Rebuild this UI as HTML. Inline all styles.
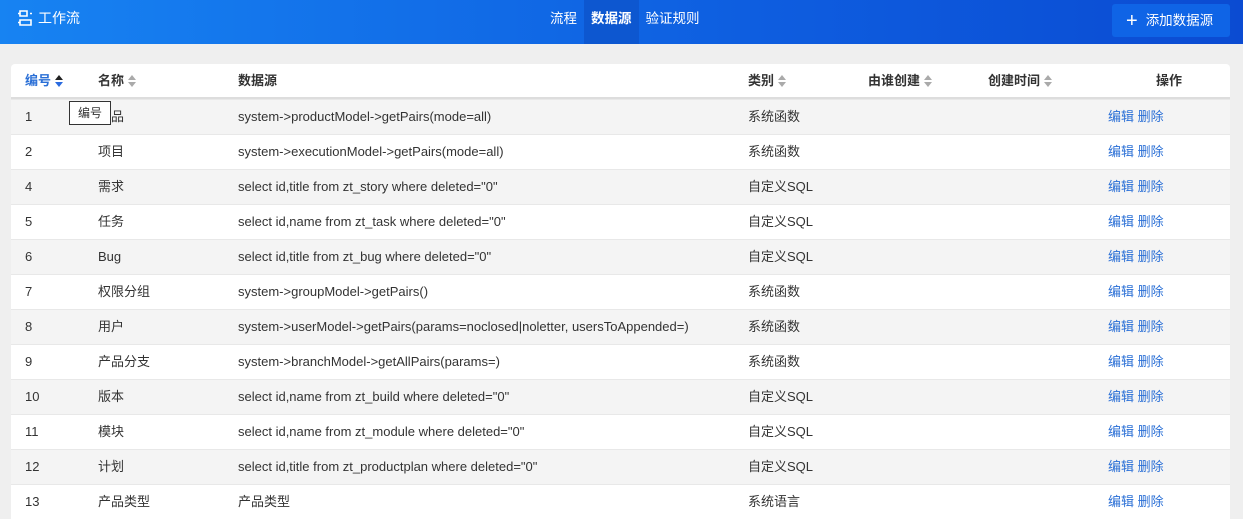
<!DOCTYPE html>
<html><head><meta charset="utf-8"><style>
*{margin:0;padding:0;box-sizing:border-box}
body{width:1243px;height:512px;overflow:hidden;background:#efefef;font-family:"Liberation Sans","Noto Sans CJK SC",sans-serif;font-size:13px;color:#333}
.top{position:absolute;left:0;top:0;width:1243px;height:44px;background:linear-gradient(90deg,#1783f2,#0e5ee0 60%,#0b4bd2);color:#fff}
.logo{position:absolute;left:17px;top:8px;font-size:14px;display:flex;align-items:center;gap:5px}
.nav{position:absolute;left:543px;top:0;display:flex;height:44px}
.nav span{padding:0 7px;line-height:37px;font-size:13.5px}
.nav span.a{background:#0d57d0;font-weight:bold}
.btn{position:absolute;left:1112px;top:4px;width:118px;height:33px;background:#0f64e6;border-radius:3px;font-size:13.5px;line-height:33px;padding-left:14px}
.btn b{font-size:20px;font-weight:normal;vertical-align:-2px;margin-right:8px}
.tbl{position:absolute;left:11px;top:64px;width:1219px;background:#fff;border-radius:4px 4px 0 0}
.row{position:relative;height:35px;border-top:1px solid #e8e8e8;background:#fff}
.row:nth-child(odd){background:#f4f4f4}
.hd{height:35px;border-bottom:2px solid #ddd;font-weight:bold;position:relative}
.c{position:absolute;top:0;line-height:34px;white-space:nowrap}
.hd .c{line-height:33px}
.s{display:inline-block;width:8px;height:12px;vertical-align:-2px;margin-left:4px;position:relative}
.s:before,.s:after{content:"";position:absolute;left:0;border-left:4px solid transparent;border-right:4px solid transparent}
.s:before{top:0;border-bottom:5px solid #aaa}
.s:after{bottom:0;border-top:5px solid #aaa}
.s.on:before{border-bottom-color:#222}.s.on:after{border-top-color:#2a6be0}
.l{color:#2a6fd6}
.tip{position:absolute;left:69px;top:101px;border:1px solid #333;background:#fff;font-size:12px;padding:2px 8px;line-height:18px}
</style></head><body>
<div class="top">
<div class="logo"><svg width="16" height="16" viewBox="0 0 16 16" fill="none" stroke="#fff" stroke-width="1.6"><path d="M3 1h7v5H3zM1 3.5h2M13 3.5h2M3 10h11v5H3zM1 12.5h2"/></svg>工作流</div>
<div class="nav"><span>流程</span><span class="a">数据源</span><span>验证规则</span></div>
<div class="btn"><b>+</b>添加数据源</div>
</div>
<div class="tbl">
<div class="hd">
<div class="c l" style="left:14px">编号<i class="s on"></i></div>
<div class="c" style="left:87px">名称<i class="s"></i></div>
<div class="c" style="left:227px">数据源</div>
<div class="c" style="left:737px">类别<i class="s"></i></div>
<div class="c" style="left:857px">由谁创建<i class="s"></i></div>
<div class="c" style="left:977px">创建时间<i class="s"></i></div>
<div class="c" style="left:1145px">操作</div>
</div>
<div>
<div class="row"><div class="c" style="left:14px">1</div><div class="c" style="left:87px">产品</div><div class="c" style="left:227px">system-&gt;productModel-&gt;getPairs(mode=all)</div><div class="c" style="left:737px">系统函数</div><div class="c l" style="left:1097px">编辑 删除</div></div>
<div class="row"><div class="c" style="left:14px">2</div><div class="c" style="left:87px">项目</div><div class="c" style="left:227px">system-&gt;executionModel-&gt;getPairs(mode=all)</div><div class="c" style="left:737px">系统函数</div><div class="c l" style="left:1097px">编辑 删除</div></div>
<div class="row"><div class="c" style="left:14px">4</div><div class="c" style="left:87px">需求</div><div class="c" style="left:227px">select id,title from zt_story where deleted="0"</div><div class="c" style="left:737px">自定义SQL</div><div class="c l" style="left:1097px">编辑 删除</div></div>
<div class="row"><div class="c" style="left:14px">5</div><div class="c" style="left:87px">任务</div><div class="c" style="left:227px">select id,name from zt_task where deleted="0"</div><div class="c" style="left:737px">自定义SQL</div><div class="c l" style="left:1097px">编辑 删除</div></div>
<div class="row"><div class="c" style="left:14px">6</div><div class="c" style="left:87px">Bug</div><div class="c" style="left:227px">select id,title from zt_bug where deleted="0"</div><div class="c" style="left:737px">自定义SQL</div><div class="c l" style="left:1097px">编辑 删除</div></div>
<div class="row"><div class="c" style="left:14px">7</div><div class="c" style="left:87px">权限分组</div><div class="c" style="left:227px">system-&gt;groupModel-&gt;getPairs()</div><div class="c" style="left:737px">系统函数</div><div class="c l" style="left:1097px">编辑 删除</div></div>
<div class="row"><div class="c" style="left:14px">8</div><div class="c" style="left:87px">用户</div><div class="c" style="left:227px">system-&gt;userModel-&gt;getPairs(params=noclosed|noletter, usersToAppended=)</div><div class="c" style="left:737px">系统函数</div><div class="c l" style="left:1097px">编辑 删除</div></div>
<div class="row"><div class="c" style="left:14px">9</div><div class="c" style="left:87px">产品分支</div><div class="c" style="left:227px">system-&gt;branchModel-&gt;getAllPairs(params=)</div><div class="c" style="left:737px">系统函数</div><div class="c l" style="left:1097px">编辑 删除</div></div>
<div class="row"><div class="c" style="left:14px">10</div><div class="c" style="left:87px">版本</div><div class="c" style="left:227px">select id,name from zt_build where deleted="0"</div><div class="c" style="left:737px">自定义SQL</div><div class="c l" style="left:1097px">编辑 删除</div></div>
<div class="row"><div class="c" style="left:14px">11</div><div class="c" style="left:87px">模块</div><div class="c" style="left:227px">select id,name from zt_module where deleted="0"</div><div class="c" style="left:737px">自定义SQL</div><div class="c l" style="left:1097px">编辑 删除</div></div>
<div class="row"><div class="c" style="left:14px">12</div><div class="c" style="left:87px">计划</div><div class="c" style="left:227px">select id,title from zt_productplan where deleted="0"</div><div class="c" style="left:737px">自定义SQL</div><div class="c l" style="left:1097px">编辑 删除</div></div>
<div class="row"><div class="c" style="left:14px">13</div><div class="c" style="left:87px">产品类型</div><div class="c" style="left:227px">产品类型</div><div class="c" style="left:737px">系统语言</div><div class="c l" style="left:1097px">编辑 删除</div></div>
</div>
</div>
<div class="tip">编号</div>
</body></html>
